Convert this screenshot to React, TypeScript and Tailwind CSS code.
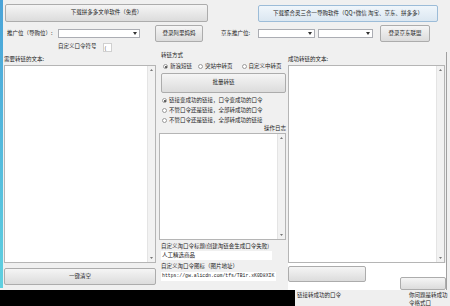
import React from 'react';

function Btn({ className = '', children, blue = false }: { className?: string; children?: React.ReactNode; blue?: boolean }) {
  const skin = blue
    ? 'border-[#9cbcd8] from-[#f0f6fb] to-[#dbe7f1]'
    : 'border-[#acacac] from-[#f5f5f5] to-[#dcdcdc]';
  return (
    <div
      className={`flex items-center justify-center border rounded-[2px] bg-linear-to-b text-[5.5px] leading-none text-[#222] whitespace-nowrap ${skin} ${className}`}
    >
      {children}
    </div>
  );
}

function Combo({ className = '' }: { className?: string }) {
  return (
    <div className={`flex items-center justify-end bg-white border border-[#abadb3] h-[9px] pr-[2px] ${className}`}>
      <svg width="4" height="3" viewBox="0 0 4 3">
        <path d="M0 0H4L2 3Z" fill="#333" />
      </svg>
    </div>
  );
}

function ScrollBox({ className = '' }: { className?: string }) {
  return (
    <div className={`flex bg-white border border-[#b5b5b5] ${className}`}>
      <div className="flex-1" />
      <div className="w-[8px] bg-[#f2f2f2] border-l border-[#e4e4e4] flex flex-col justify-between items-center py-[3px]">
        <svg width="3" height="2" viewBox="0 0 3 2">
          <path d="M0 2H3L1.5 0Z" fill="#777" />
        </svg>
        <svg width="3" height="2" viewBox="0 0 3 2">
          <path d="M0 0H3L1.5 2Z" fill="#777" />
        </svg>
      </div>
    </div>
  );
}

function Radio({ checked = false, label, className = '' }: { checked?: boolean; label: string; className?: string }) {
  return (
    <div className={`flex items-center gap-[2px] ${className}`}>
      <div className="w-[5px] h-[5px] rounded-full border border-[#9a9a9a] bg-white flex items-center justify-center">
        {checked && <div className="w-[2px] h-[2px] rounded-full bg-[#333]" />}
      </div>
      <span>{label}</span>
    </div>
  );
}

export default function App() {
  return (
    <div className="w-[450px] h-[306px] overflow-hidden flex flex-col bg-[#f0f0f0] text-[5.5px] leading-none text-[#222] font-['Noto_Sans_CJK_SC','Noto_Sans',sans-serif]">
      <div className="flex h-[290px]">
        <div className="w-[3px] h-[288px] bg-linear-to-b from-[#4aa3d8] to-[#5fd0e0]" />
        <div className="flex-1 flex flex-col">
          {/* top buttons */}
          <div className="flex mt-[4px]">
            <Btn className="ml-[2px] w-[203px] h-[18px]">下载拼多多文单软件（免费）</Btn>
            <Btn blue className="ml-[50px] mt-[1px] w-[180px] h-[17px]">
              下载聚合灵三合一导购软件（QQ+微信 淘宝、京东、拼多多）
            </Btn>
          </div>

          {/* account row */}
          <div className="flex items-center mt-[3px] h-[17px]">
            <span className="ml-[4px] w-[51px]">推广位（导购位）:</span>
            <Combo className="w-[82px]" />
            <Btn className="ml-[15px] w-[48px] h-[17px]">登录阿里妈妈</Btn>
            <span className="ml-[18px] w-[37px]">京东推广位:</span>
            <Combo className="w-[57px]" />
            <Combo className="ml-[3px] w-[55px]" />
            <Btn className="ml-[7px] w-[50px] h-[17px]">登录京东联盟</Btn>
          </div>

          <div className="flex items-center h-[10px]">
            <span className="ml-[55px]">自定义口令符号</span>
            <div className="ml-[6px] w-[9px] h-[9px] bg-white border border-[#d0d0d0] flex items-center pl-[1px] text-[5px]">(</div>
          </div>

          {/* columns */}
          <div className="flex">
            <div className="ml-[1px] w-[152px] flex flex-col">
              <span className="mt-[5px] h-[7px]">需要转链的文本:</span>
              <ScrollBox className="mt-[1px] h-[198px]" />
              <Btn className="mt-[5px] h-[17px]">一键清空</Btn>
            </div>

            <div className="ml-[3px] w-[127px] flex flex-col">
              <span className="mt-[1px] ml-[2px] h-[7px]">转链方式</span>
              <div className="flex items-center mt-[3px] ml-[4px] h-[7px]">
                <Radio checked label="新浪短链" />
                <Radio className="ml-[6px]" label="突站中转页" />
                <Radio className="ml-[9px]" label="自定义中转页" />
              </div>
              <Btn className="mt-[3px] ml-[2px] h-[20px]">批量转链</Btn>
              <div className="flex flex-col gap-[3px] mt-[4px] ml-[3px]">
                <Radio checked label="链接变成功的链接，口令变成功的口令" className="h-[7px]" />
                <Radio label="不管口令还是链接，全部转成功的口令" className="h-[7px]" />
                <Radio label="不管口令还是链接，全部转成功的链接" className="h-[7px]" />
              </div>
              <span className="self-end mt-[2px] h-[6px]">操作日志</span>
              <ScrollBox className="mt-[1px] h-[107px]" />
              <span className="mt-[4px] ml-[2px] h-[6px]">自定义淘口令标题(创建淘链会生成口令失败)</span>
              <div className="mt-[1px] ml-[2px] mr-[14px] h-[9px] bg-white flex items-center pl-[1px]">人工精选商品</div>
              <span className="mt-[4px] ml-[2px] h-[6px]">自定义淘口令图标（图片地址）</span>
              <div className="mt-[2px] ml-[2px] mr-[10px] h-[9px] bg-white flex items-center pl-[1px] whitespace-nowrap font-['Liberation_Mono',monospace] text-[4.8px]">
                https://gw.alicdn.com/tfs/TB1r.xK0D8XIK
              </div>
            </div>

            <div className="ml-[2px] w-[158px] flex flex-col">
              <span className="mt-[5px] h-[7px]">成功转链的文本:</span>
              <ScrollBox className="mt-[1px] h-[198px] mr-[1px]" />
              <div className="flex bg-white h-[27px]">
                <Btn className="mt-[3px] w-[78px] h-[16px]" />
                <div className="flex-1" />
                <Btn className="mt-[14px] w-[46px] h-[13px]" />
              </div>
            </div>
            <div className="w-[1px] h-[238px] bg-[#a0a0a0]" />
          </div>
        </div>
      </div>

      {/* bottom overlap strip */}
      <div className="flex h-[16px]">
        <div className="w-[295px] bg-black" />
        <div className="flex-1 flex bg-[#efefef] pt-[3px] overflow-hidden whitespace-nowrap">
          <span className="ml-[2px]">链接转成功的口令</span>
          <div className="ml-[68px] flex flex-col gap-[2px]">
            <span>你问题是转成功</span>
            <span>令格式口</span>
          </div>
        </div>
      </div>
    </div>
  );
}
